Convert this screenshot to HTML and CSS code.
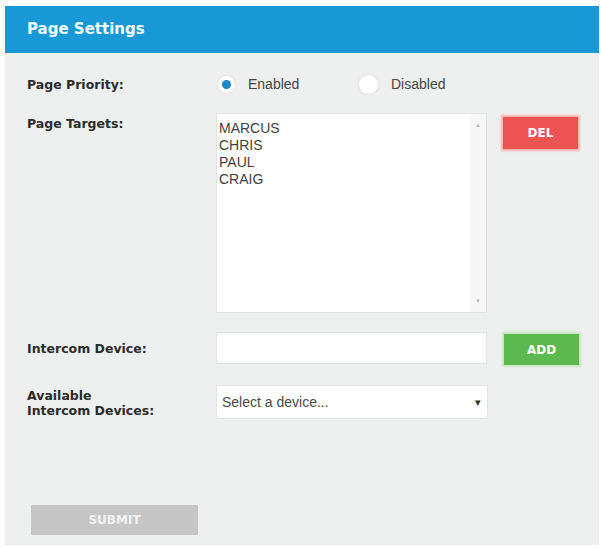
FILE: index.html
```html
<!DOCTYPE html>
<html lang="en">
<head>
  <meta charset="UTF-8">
  <title>Page Settings</title>
  <link rel="stylesheet" href="styles.css">
</head>
<body>
  <div class="panel">
    <div class="panel-head">Page Settings</div>
    <div class="panel-body">
      <div class="row row-priority">
        <div class="label">Page Priority:</div>
        <div class="radios">
          <span class="radio checked"></span><span class="radio-text">Enabled</span>
          <span class="radio off"></span><span class="radio-text">Disabled</span>
        </div>
      </div>

      <div class="row row-targets">
        <div class="label">Page Targets:</div>
        <div class="listbox">
          <div class="list-items">
            <div>MARCUS</div>
            <div>CHRIS</div>
            <div>PAUL</div>
            <div>CRAIG</div>
          </div>
          <div class="scroll-col">
            <span class="arrow">&#9650;</span>
            <span class="arrow">&#9660;</span>
          </div>
        </div>
        <button class="btn btn-del">DEL</button>
      </div>

      <div class="row row-device">
        <div class="label">Intercom Device:</div>
        <div class="text-input"></div>
        <button class="btn btn-add">ADD</button>
      </div>

      <div class="row row-available">
        <div class="label">Available<br>Intercom Devices:</div>
        <div class="select">
          <span>Select a device...</span>
          <span class="caret">&#9662;</span>
        </div>
      </div>

      <div class="submit-wrap">
        <button class="btn btn-submit">SUBMIT</button>
      </div>
    </div>
  </div>
</body>
</html>
```

FILE: styles.css
```css
body {
  margin: 0;
  background: #fdfdfd;
  font-family: "Liberation Sans", Arial, sans-serif;
}
.panel {
  margin: 6px 2px 0 5px;
  width: 594px;
  height: 539px;
  background: #eef0ef;
  display: flex;
  flex-direction: column;
}
.panel-head {
  height: 47px;
  line-height: 47px;
  background: #1899d5;
  color: #f4faff;
  font-family: "DejaVu Sans", Verdana, sans-serif;
  font-weight: 700;
  font-size: 15px;
  padding-left: 22px;
}
.panel-body {
  padding: 0 0 0 22px;
  flex: 1;
  display: flex;
  flex-direction: column;
}
.row {
  display: flex;
}
.label {
  width: 189px;
  font-family: "DejaVu Sans", Verdana, sans-serif;
  font-size: 12.5px;
  font-weight: 700;
  color: #2b2b2b;
  flex-shrink: 0;
}
.row-priority {
  margin-top: 23px;
  height: 16px;
  align-items: center;
}
.radios {
  display: flex;
  align-items: center;
  font-size: 14px;
  color: #444;
}
.radio {
  width: 17px;
  height: 17px;
  border-radius: 50%;
  background: #fff;
  box-shadow: 0 0 2px 1px #e6e2dc;
  margin-left: 2px;
  position: relative;
}
.radio.checked::after {
  content: "";
  position: absolute;
  left: 4px;
  top: 4px;
  width: 9px;
  height: 9px;
  border-radius: 50%;
  background: #1c8ac4;
}
.radio.off {
  width: 19px;
  height: 19px;
  margin-left: 0;
}
.radio-text {
  margin-left: 13px;
  width: 111px;
}
.radio.off + .radio-text {
  margin-left: 13px;
}
.row-targets {
  margin-top: 21px;
}
.row-targets .label {
  padding-top: 3px;
}
.listbox {
  width: 269px;
  height: 198px;
  background: #fff;
  border: 1px solid #e2e4e3;
  display: flex;
}
.list-items {
  flex: 1;
  padding: 6px 0 0 2px;
  font-size: 14px;
  line-height: 17px;
  color: #3f3f3f;
}
.scroll-col {
  width: 16px;
  background: #f7f7f7;
  display: flex;
  flex-direction: column;
  justify-content: space-between;
  align-items: center;
  padding: 8px 0 8px;
}
.arrow {
  font-size: 6px;
  color: #b8b8b8;
}
.btn {
  border: none;
  font-family: "DejaVu Sans", Verdana, sans-serif;
  font-weight: 700;
  font-size: 12px;
  color: #fff;
  padding: 0;
}
.btn-del {
  margin-left: 16px;
  margin-top: 4px;
  width: 75px;
  height: 32px;
  background: #ec5454;
  box-shadow: 0 0 2px 2px #f7b3b0;
}
.row-device {
  margin-top: 19px;
  align-items: flex-start;
}
.row-device .label {
  padding-top: 9px;
}
.text-input {
  width: 269px;
  height: 30px;
  background: #fff;
  border: 1px solid #e2e4e3;
}
.btn-add {
  margin-left: 17px;
  margin-top: 2px;
  width: 75px;
  height: 31px;
  background: #5cb94f;
  box-shadow: 0 0 2px 2px #c4e6bd;
}
.row-available {
  margin-top: 20px;
  align-items: center;
}
.row-available .label {
  line-height: 15px;
  margin-top: 2px;
}
.select {
  width: 259px;
  height: 32px;
  background: #fff;
  border: 1px solid #e2e4e3;
  display: flex;
  align-items: center;
  justify-content: space-between;
  padding: 0 6px 0 5px;
  font-size: 14px;
  color: #4a4a4a;
}
.caret {
  font-size: 11px;
  color: #333;
}
.submit-wrap {
  margin-top: auto;
  margin-bottom: 10px;
  padding-left: 4px;
}
.btn-submit {
  width: 167px;
  height: 30px;
  background: #c6c6c6;
  color: #f3f3f3;
}
```
